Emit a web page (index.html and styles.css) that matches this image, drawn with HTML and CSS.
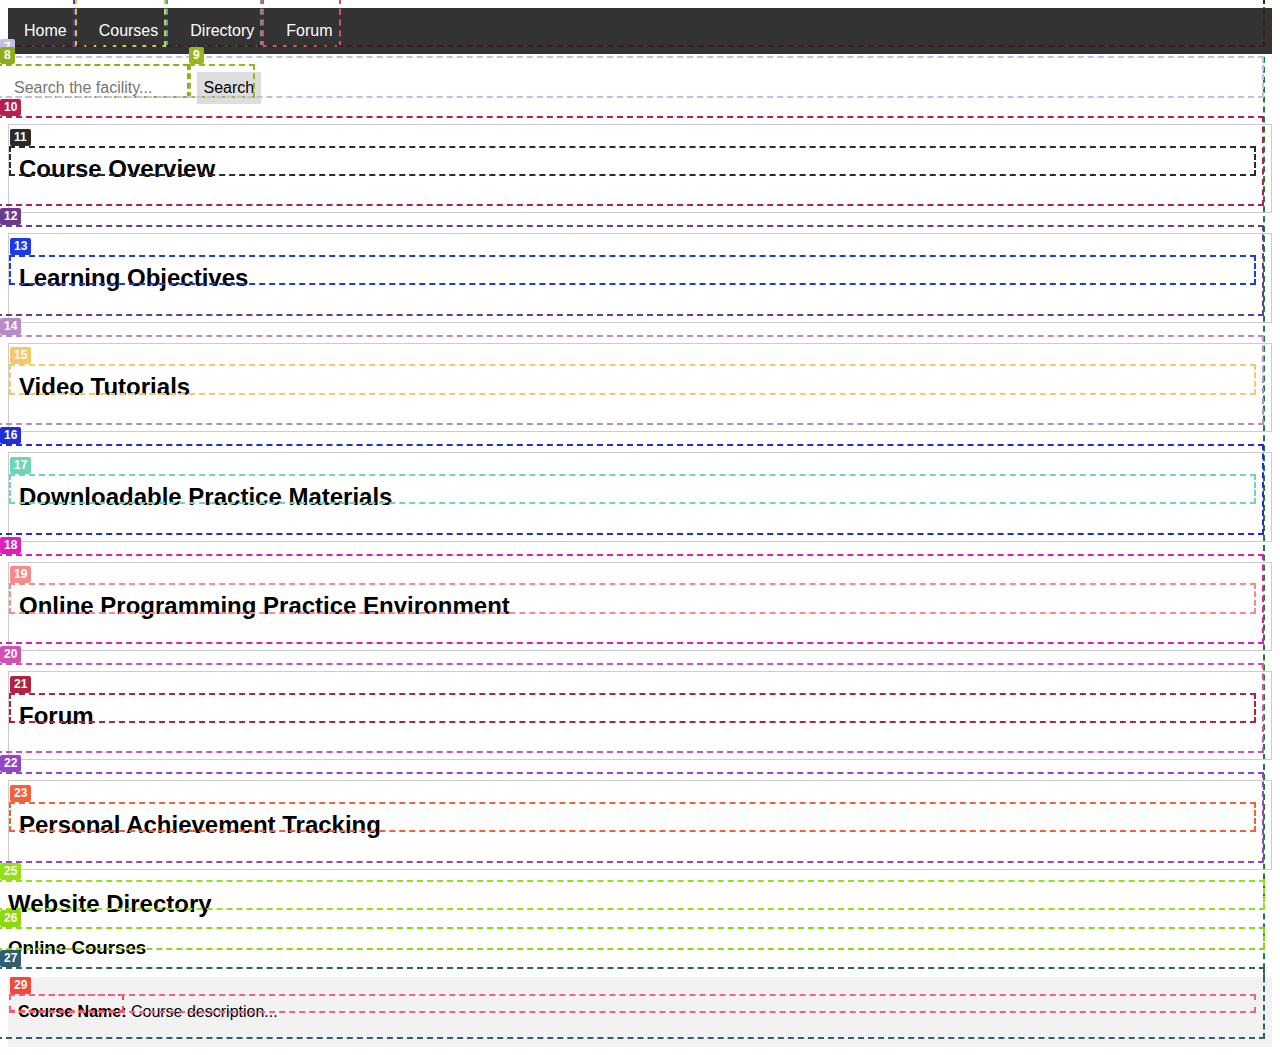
FILE: index.html
```html
<!DOCTYPE html>
<html lang="en">
<head>
<meta charset="utf-8">
<title>Programming Learning Facility</title>
<link rel="stylesheet" href="styles.css">
</head>
<body>
<div class="page">
  <nav class="topnav mk full c-nav">
    <a class="navlink mk link first c-home" href="#">Home</a>
    <a class="navlink mk link c-courses" href="#">Courses</a>
    <a class="navlink mk link c-dir" href="#">Directory</a>
    <a class="navlink mk link c-forum" href="#">Forum</a>
  </nav>

  <form class="search mk full form-box c7">
    <span class="tag">7</span>
    <span class="field mk field-box c8"><span class="tag">8</span><input type="text" placeholder="Search the facility..."></span>
    <button type="button" class="search-btn mk btn-box c9"><span class="tag">9</span>Search</button>
  </form>

  <section class="card mk full card-box c10"><span class="tag">10</span>
    <h2 class="card-title mk title-box c11"><span class="tag">11</span>Course Overview</h2>
  </section>
  <section class="card mk full card-box c12"><span class="tag">12</span>
    <h2 class="card-title mk title-box c13"><span class="tag">13</span>Learning Objectives</h2>
  </section>
  <section class="card mk full card-box c14"><span class="tag">14</span>
    <h2 class="card-title mk title-box c15"><span class="tag">15</span>Video Tutorials</h2>
  </section>
  <section class="card mk full card-box c16"><span class="tag">16</span>
    <h2 class="card-title mk title-box c17"><span class="tag">17</span>Downloadable Practice Materials</h2>
  </section>
  <section class="card mk full card-box c18"><span class="tag">18</span>
    <h2 class="card-title mk title-box c19"><span class="tag">19</span>Online Programming Practice Environment</h2>
  </section>
  <section class="card mk full card-box c20"><span class="tag">20</span>
    <h2 class="card-title mk title-box c21"><span class="tag">21</span>Forum</h2>
  </section>
  <section class="card mk full card-box c22"><span class="tag">22</span>
    <h2 class="card-title mk title-box c23"><span class="tag">23</span>Personal Achievement Tracking</h2>
  </section>

  <section class="directory">
    <h2 class="dir-title mk full dtitle-box c25"><span class="tag">25</span>Website Directory</h2>
    <h3 class="dir-sub mk full dsub-box c26"><span class="tag">26</span>Online Courses</h3>
    <div class="course-list mk full list-box c27"><span class="tag">27</span>
      <p class="course-item mk item-box c28"><span class="tag">28</span><strong class="mk name-box c29"><span class="tag">29</span>Course Name:</strong> Course description...</p>
    </div>
  </section>
</div>
</body>
</html>
```

FILE: styles.css
```css
* {
  box-sizing: border-box;
}

body {
  margin: 0;
  font-family: "Liberation Sans", Arial, sans-serif;
  font-size: 16px;
  color: #000;
  background: #fff;
}

.page {
  position: relative;
  padding: 8px 8px 0;
}

.page::before {
  content: "";
  position: absolute;
  top: -3px;
  right: 15px;
  bottom: 8px;
  left: -4px;
  border: 2px dashed #1e7b34;
  pointer-events: none;
}

/* ---------- annotation marks ---------- */
.mk {
  position: relative;
}

.mk::after {
  content: "";
  position: absolute;
  top: var(--t);
  right: var(--r);
  bottom: var(--b);
  left: var(--l);
  border: 2px dashed var(--c);
  pointer-events: none;
}

.tag {
  position: absolute;
  left: var(--tl);
  top: calc(var(--t) - 17px);
  height: 17px;
  padding: 0 4px;
  background: var(--c);
  color: #fff;
  font: bold 12px/17px "Liberation Sans", Arial, sans-serif;
  border-radius: 2px;
  white-space: nowrap;
  z-index: 1;
}

.full { --l: -12px; --tl: -8px; }

.link { --t: -10px; --r: 8px; --b: 7px; --l: -8px; }
.link.first { --l: -12px; }
.topnav.mk { --t: -10px; --r: 7px; --b: 7px; }
.form-box { --t: 1.5px; --r: 8px; --b: 6.4px; }
.field-box { --t: -8.4px; --r: 8px; --b: 6.4px; --l: -12px; --tl: -8px; }
.btn-box { --t: -8.4px; --r: 6px; --b: 6.4px; --l: -8px; --tl: -8px; }
.card-box { --t: -9px; --r: 7px; --b: 6px; --l: -13px; --tl: -9px; }
.title-box { --t: -9px; --r: 5px; --b: 6.6px; --l: -10px; --tl: -9px; }
.dtitle-box { --t: -10px; --r: 7px; --b: 7.5px; }
.dsub-box { --t: -10px; --r: 7px; --b: 8.5px; }
.list-box { --t: -10px; --r: 7px; --b: 8px; }
.item-box { --t: -9.5px; --r: 6px; --b: 8px; --l: -9px; --tl: -8px; }
.name-box { --t: -9.5px; --r: 2px; --b: 8px; --l: -9px; --tl: -8px; }

.c-nav { --c: #3b2314; }
.c-home { --c: #7b2d9a; }
.c-courses { --c: #b9d646; }
.c-dir { --c: #5f9ea0; }
.c-forum { --c: #d9506e; }
.c7 { --c: #c5bde6; }
.c8 { --c: #8fac1c; }
.c9 { --c: #9ab520; }
.c10 { --c: #b3204d; }
.c11 { --c: #2b2b2b; }
.c12 { --c: #6c3b8f; }
.c13 { --c: #1c3be6; }
.c14 { --c: #b78cc6; }
.c15 { --c: #f5c96b; }
.c16 { --c: #1f2ed6; }
.c17 { --c: #6dd6b8; }
.c18 { --c: #dc1fb6; }
.c19 { --c: #f78b8b; }
.c20 { --c: #cf52b3; }
.c21 { --c: #b0223f; }
.c22 { --c: #9446c6; }
.c23 { --c: #f0613c; }
.c25 { --c: #93e014; }
.c26 { --c: #8bd80f; }
.c27 { --c: #2e5e70; }
.c28 { --c: #f2608c; }
.c29 { --c: #f24a36; }

/* ---------- navigation ---------- */
.topnav {
  display: flex;
  background: #333;
}

.navlink {
  display: block;
  padding: 14px 16px;
  color: #fff;
  text-decoration: none;
  line-height: normal;
}

/* ---------- search ---------- */
.search {
  display: flex;
  align-items: flex-start;
  margin: 0;
  padding-top: 18px;
}

.field {
  display: block;
  width: 189px;
}

.field input {
  display: block;
  width: 189px;
  height: 32px;
  padding: 0 6px;
  border: 0;
  background: transparent;
  font: inherit;
  color: #000;
  outline: none;
}

.field input::placeholder {
  color: #757575;
}

.search-btn {
  height: 32px;
  padding: 0 6.5px;
  border: 0;
  background: #ddd;
  color: #000;
  font: inherit;
}

/* ---------- sections ---------- */
.card {
  border: 1px solid #ccc;
  padding: 10px;
  margin: 20px 0;
}

.card-title {
  font-size: 24px;
  font-weight: bold;
  margin: 19.7px 0;
}

.dir-title {
  font-size: 24px;
  font-weight: bold;
  margin: 19.7px 0 19px;
}

.dir-sub {
  font-size: 18.72px;
  font-weight: bold;
  margin: 18.72px 0;
}

.course-list {
  background: #f2f2f2;
  padding: 10px;
}

.course-item {
  margin: 16px 0;
}
```
